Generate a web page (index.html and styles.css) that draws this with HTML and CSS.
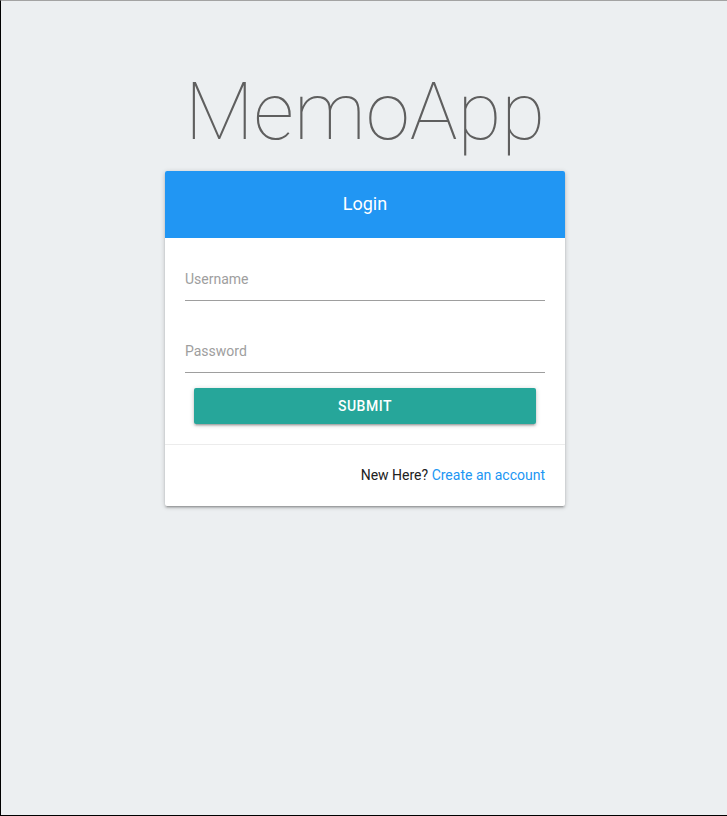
FILE: index.html
```html
<!DOCTYPE html>
<html lang="en">
<head>
<meta charset="utf-8">
<title>MemoApp</title>
<link rel="stylesheet" href="styles.css">
</head>
<body>
<div class="page">
  <h1 class="title">MemoApp</h1>
  <div class="card">
    <div class="card-header">Login</div>
    <div class="card-body">
      <div class="field"><span class="label">Username</span></div>
      <div class="field field-2"><span class="label">Password</span></div>
      <button class="btn" type="button">Submit</button>
    </div>
    <div class="card-footer">
      <span class="muted">New Here?</span> <a class="link" href="#">Create an account</a>
    </div>
  </div>
</div>
</body>
</html>
```
FILE: styles.css
```css
html, body {
  margin: 0;
  padding: 0;
}
body {
  font-family: Roboto, "Liberation Sans", sans-serif;
  background: #eceff1;
}
.page {
  box-sizing: border-box;
  height: 816px;
  border-top: 1px solid #a3a3a3;
  border-left: 1px solid #000;
  border-bottom: 1px solid #000;
  padding: 71px 0 0 2px;
  display: flex;
  flex-direction: column;
  align-items: center;
}
.title {
  margin: 0 0 19px;
  font-family: Roboto, sans-serif;
  font-weight: 100;
  font-size: 80px;
  line-height: 80px;
  color: #5f5f5f;
}
.card {
  width: 400px;
  background: #fff;
  border-radius: 2px;
  box-shadow: 0 2px 2px 0 rgba(0,0,0,.14), 0 3px 1px -2px rgba(0,0,0,.12), 0 1px 5px 0 rgba(0,0,0,.2);
}
.card-header {
  height: 67px;
  background: #2196f3;
  color: #fff;
  font-size: 18px;
  display: flex;
  align-items: center;
  justify-content: center;
  padding-bottom: 2px;
  box-sizing: border-box;
  border-radius: 2px 2px 0 0;
}
.card-body {
  padding: 20px 20px 20px;
  display: flex;
  flex-direction: column;
}
.field {
  padding: 11px 0 11px;
  border-bottom: 1px solid #9e9e9e;
}
.field-2 {
  margin-top: 29px;
}
.label {
  display: block;
  font-size: 14px;
  line-height: 20px;
  color: #9e9e9e;
}
.btn {
  margin: 15px 9px 0;
  height: 36px;
  border: none;
  border-radius: 2px;
  background: #26a69a;
  color: #fff;
  font-family: Roboto, sans-serif;
  font-size: 14px;
  font-weight: 500;
  letter-spacing: .5px;
  text-transform: uppercase;
  box-shadow: 0 2px 2px 0 rgba(0,0,0,.14), 0 3px 1px -2px rgba(0,0,0,.12), 0 1px 5px 0 rgba(0,0,0,.2);
  cursor: pointer;
}
.card-footer {
  border-top: 1px solid rgba(160,160,160,.2);
  padding: 20px;
  text-align: right;
  font-size: 14px;
  line-height: 21px;
}
.muted {
  color: #212121;
}
.link {
  color: #2196f3;
  text-decoration: none;
}
```
